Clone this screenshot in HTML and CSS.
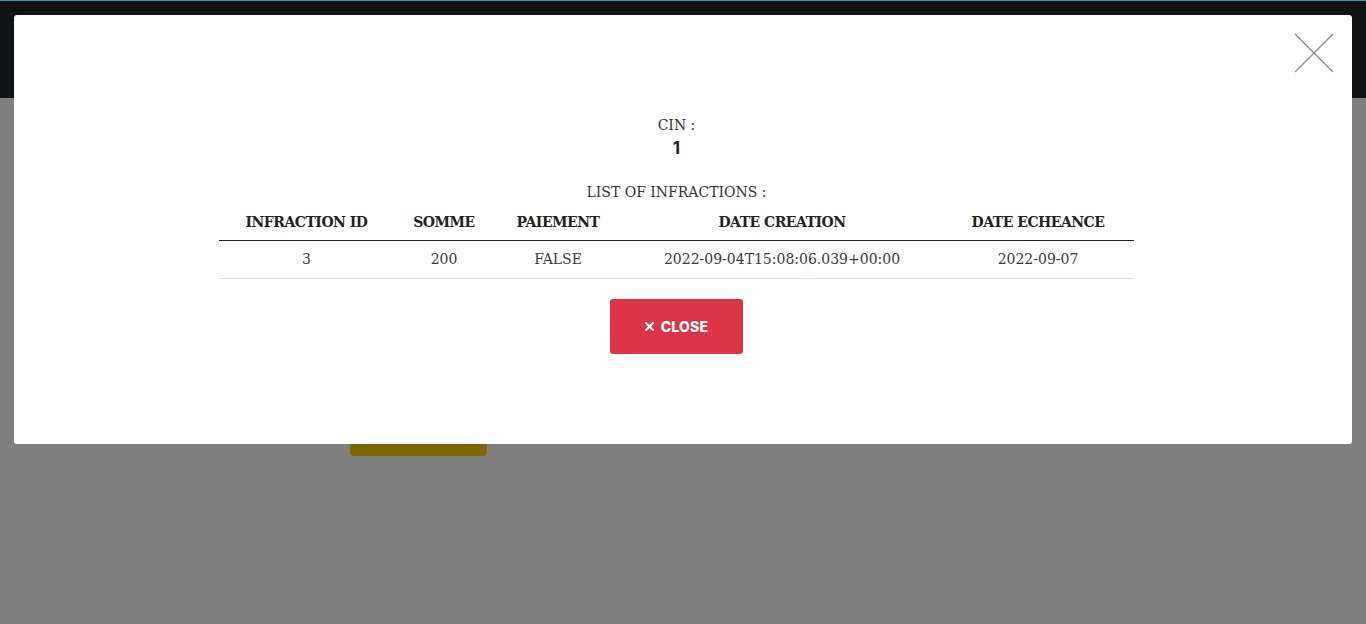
FILE: index.html
```html
<!DOCTYPE html>
<html>
<head>
<meta charset="utf-8">
<link rel="stylesheet" href="styles.css">
</head>
<body>
<div class="page">
  <header class="topbar"></header>
  <main class="content">
    <button class="yellow-btn">Show</button>
  </main>
</div>
<div class="overlay">
  <div class="modal">
    <button class="modal-x" aria-label="close">
      <svg width="40" height="40" viewBox="0 0 40 40"><path d="M1 1 L39 39 M39 1 L1 39" stroke="#8a8a8a" stroke-width="1.2" fill="none"/></svg>
    </button>
    <div class="modal-body">
      <div class="cin-label">CIN :</div>
      <div class="cin-value">1</div>
      <div class="list-label">LIST OF INFRACTIONS :</div>
      <table class="tbl">
        <colgroup>
          <col class="c1"><col class="c2"><col class="c3"><col class="c4"><col class="c5">
        </colgroup>
        <thead>
          <tr><th>INFRACTION ID</th><th>SOMME</th><th>PAIEMENT</th><th>DATE CREATION</th><th>DATE ECHEANCE</th></tr>
        </thead>
        <tbody>
          <tr><td>3</td><td>200</td><td>FALSE</td><td>2022-09-04T15:08:06.039+00:00</td><td>2022-09-07</td></tr>
        </tbody>
      </table>
      <button class="close-btn"><svg class="cx" width="9" height="9" viewBox="0 0 9 9"><path d="M1 1 L8 8 M8 1 L1 8" stroke="#fff" stroke-width="2.2" stroke-linecap="square" fill="none"/></svg>CLOSE</button>
    </div>
  </div>
</div>
</body>
</html>
```
FILE: styles.css
```css
html, body { margin: 0; padding: 0; }
body { width: 1366px; height: 624px; overflow: hidden; background: #fff; font-family: "DejaVu Serif", serif; }
.page { height: 624px; }
.topbar { height: 97px; background: #222428; border-top: 1px solid #4fbfc4; }
.content { padding: 0 0 0 350px; }
.yellow-btn { display: block; margin-top: 300px; width: 137px; height: 58px; background: #ffcc00; border: 0; border-radius: 4px; color: #ffcc00; }
.overlay { position: absolute; left: 0; top: 0; width: 1366px; height: 624px; background: rgba(0,0,0,0.5); }
.overlay::before { content: ""; position: absolute; left: 0; top: 0; width: 1366px; height: 1px; background: #3a9ea4; }
.modal { position: absolute; left: 14px; top: 15px; width: 1338px; height: 429px; background: #fff; border-radius: 3px; }
.modal-x { position: absolute; right: 18px; top: 18px; background: none; border: 0; padding: 0; width: 40px; height: 40px; }
.modal-x svg { display: block; }
.modal-body { display: flex; flex-direction: column; align-items: center; padding-top: 101px; padding-right: 13px; color: #333; }
.cin-label { font-size: 14px; line-height: 18px; color: #333; font-weight: 300; }
.cin-value { font-family: "Inter", sans-serif; font-weight: 700; font-size: 17px; line-height: 24px; margin-top: 2px; color: #222; }
.list-label { font-size: 14px; line-height: 18px; margin-top: 23px; color: #333; }
.tbl { width: 915px; border-collapse: collapse; margin-top: 2px; table-layout: fixed; }
.c1 { width: 175px; } .c2 { width: 100px; } .c3 { width: 128px; } .c4 { width: 320px; } .c5 { width: 192px; }
.tbl th { font-size: 14px; letter-spacing: -0.5px; font-weight: 700; color: #222; height: 37px; padding: 2px 0 0; border-bottom: 1px solid #222; text-align: center; vertical-align: middle; box-sizing: border-box; }
.tbl td { font-size: 14px; color: #3a3a3a; height: 37px; padding: 0; border-bottom: 1px solid #dee2e6; text-align: center; vertical-align: middle; }
.close-btn { margin-top: 20px; width: 133px; height: 55px; background: #dc3545; color: #fff; border: 0; border-radius: 3px; font-family: "Inter", sans-serif; font-weight: 800; font-size: 14px; letter-spacing: 0.2px; display: flex; align-items: center; justify-content: center; }
.cx { display: block; margin-right: 7px; }
```
